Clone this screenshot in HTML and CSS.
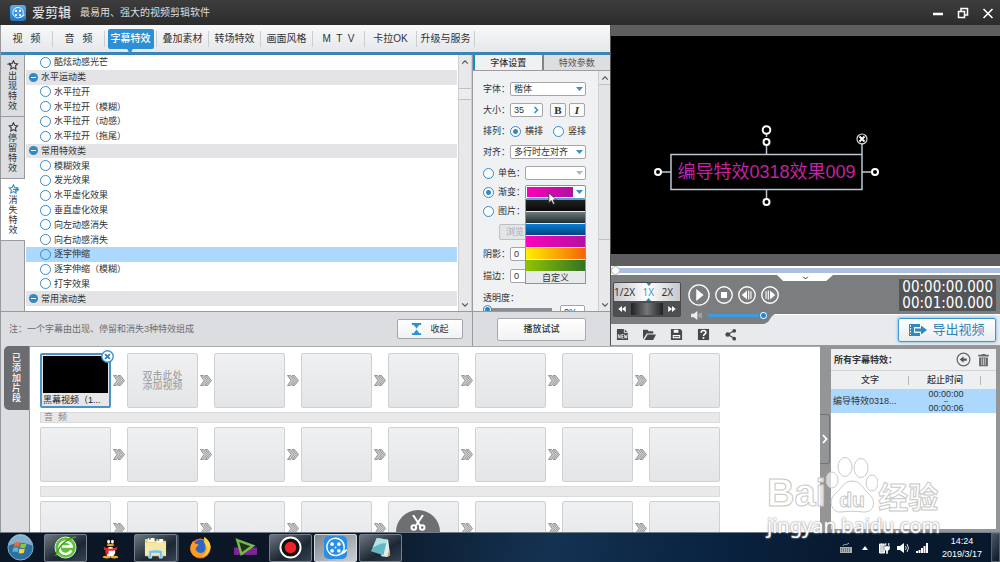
FILE: index.html
```html
<!DOCTYPE html>
<html lang="zh-CN">
<head>
<meta charset="utf-8">
<title>爱剪辑</title>
<link rel="stylesheet" href="styles.css">
</head>
<body>
<svg class="defs" aria-hidden="true">
  <defs>
    <symbol id="reel" viewBox="0 0 24 24"><g fill="none" stroke="#fff" stroke-width="1.500"><path d="M20 15.5A9 9 0 1 1 21 12c0 2 0 3-1 4 1 0 2-.5 3-1-2 3-5 4-8 4.500"/></g><g fill="#fff"><circle cx="8.500" cy="8.500" r="1.900"/><circle cx="15.500" cy="8.500" r="1.900"/><circle cx="8.500" cy="15.500" r="1.900"/><circle cx="15.500" cy="15.500" r="1.900"/><circle cx="12" cy="12" r="1"/></g></symbol>
    <symbol id="star" viewBox="0 0 14 12"><path d="M7.500 1l1.600 3.200 3.400.500-2.500 2.400.600 3.600-3.100-1.700-3.100 1.700.600-3.600L2.500 4.700l3.400-.500z" fill="none" stroke="currentColor" stroke-width="1.300"/></symbol>
    <symbol id="up" viewBox="0 0 10 6"><path d="M1.500 5L5 1.500 8.500 5" fill="none" stroke="currentColor" stroke-width="1.500"/></symbol>
    <symbol id="down" viewBox="0 0 10 6"><path d="M1.500 1L5 4.500 8.500 1" fill="none" stroke="currentColor" stroke-width="1.500"/></symbol>
  </defs>
</svg>

<header class="titlebar">
  <span class="logo"><svg viewBox="0 0 24 24"><use href="#reel"/></svg></span>
  <h1>爱剪辑</h1>
  <p>最易用、强大的视频剪辑软件</p>
  <div class="window-buttons">
    <button aria-label="最小化"><svg viewBox="0 0 12 12"><path d="M1 7h10" stroke="#fff" stroke-width="2.500"/></svg></button>
    <button aria-label="还原"><svg viewBox="0 0 12 12" fill="none" stroke="#fff" stroke-width="1.500"><path d="M1.500 4.500h6v6h-6zM4 4V1.500h6.500V8H8"/></svg></button>
    <button aria-label="关闭"><svg viewBox="0 0 12 12"><path d="M1.500 2l9 9m0-9l-9 9" stroke="#fff" stroke-width="1.600"/></svg></button>
  </div>
</header>

<main class="workspace">
  <section class="editor">
    <nav class="main-tabs">
      <button>视&ensp;&nbsp;频</button>
      <button>音&ensp;&nbsp;频</button>
      <button class="active"><span>字幕特效</span></button>
      <button>叠加素材</button>
      <button>转场特效</button>
      <button>画面风格</button>
      <button>M&nbsp; T&nbsp; V</button>
      <button>卡拉OK</button>
      <button class="wide">升级与服务</button>
    </nav>
    <div class="editor-body">
      <nav class="side-tabs">
        <button><svg viewBox="0 0 14 12"><use href="#star"/><path d="M0 5h4M2.500 3.500L4.500 5 2.500 6.500" stroke="currentColor" fill="none"/></svg><span>出现特效</span></button>
        <button><svg viewBox="0 0 14 12"><use href="#star"/></svg><span>停留特效</span></button>
        <button class="active"><svg viewBox="0 0 14 12"><use href="#star"/><path d="M7 6.500h6M11 4l2.500 2.500L11 9" stroke="currentColor" fill="none" stroke-width="1.500"/></svg><span>消失特效</span></button>
      </nav>
      <div class="effects">
        <label class="effect"><input type="radio" name="fx">酷炫动感光芒</label>
        <button class="category"><i></i>水平运动类</button>
        <label class="effect"><input type="radio" name="fx">水平拉开</label>
        <label class="effect"><input type="radio" name="fx">水平拉开（模糊）</label>
        <label class="effect"><input type="radio" name="fx">水平拉开（动感）</label>
        <label class="effect"><input type="radio" name="fx">水平拉开（拖尾）</label>
        <button class="category"><i></i>常用特效类</button>
        <label class="effect"><input type="radio" name="fx">模糊效果</label>
        <label class="effect"><input type="radio" name="fx">发光效果</label>
        <label class="effect"><input type="radio" name="fx">水平虚化效果</label>
        <label class="effect"><input type="radio" name="fx">垂直虚化效果</label>
        <label class="effect"><input type="radio" name="fx">向左动感消失</label>
        <label class="effect"><input type="radio" name="fx">向右动感消失</label>
        <label class="effect selected"><input type="radio" name="fx">逐字伸缩</label>
        <label class="effect"><input type="radio" name="fx">逐字伸缩（模糊）</label>
        <label class="effect"><input type="radio" name="fx">打字效果</label>
        <button class="category"><i></i>常用滚动类</button>
      </div>
      <div class="scrollbar list-scroll">
        <button aria-label="向上"><svg viewBox="0 0 10 6"><use href="#up"/></svg></button>
        <span class="thumb"></span>
        <button aria-label="向下"><svg viewBox="0 0 10 6"><use href="#down"/></svg></button>
      </div>
      <section class="settings">
        <div class="settings-tabs"><button class="active">字体设置</button><button>特效参数</button></div>
        <div class="settings-body">
          <form class="fields">
            <div class="field"><label for="font">字体：</label><span class="pick"><select id="font"><option>楷体</option></select></span></div>
            <div class="field"><label for="size">大小：</label><span class="spin"><input id="size" value="35"><svg viewBox="0 0 6 8"><path d="M1.500 1L4.500 4l-3 3" fill="none" stroke="#2f96cc" stroke-width="1.600"/></svg></span><button type="button" class="style bold">B</button><button type="button" class="style italic">I</button></div>
            <div class="field"><span class="caption">排列：</span><label class="choice"><input type="radio" name="dir" checked>横排</label><label class="choice"><input type="radio" name="dir">竖排</label></div>
            <div class="field"><label for="align">对齐：</label><span class="pick"><select id="align"><option>多行时左对齐</option></select></span></div>
            <div class="fill-group">
              <div class="field"><label class="choice"><input type="radio" name="fill">单色：</label><span class="pick dim"><select aria-label="单色"><option></option></select></span></div>
              <div class="field"><label class="choice"><input type="radio" name="fill" checked>渐变：</label><span class="pick open"><select class="gradient" aria-label="渐变"><option></option></select>
                <span class="swatches">
                  <button type="button" class="black" aria-label="黑色"></button>
                  <button type="button" class="slate" aria-label="灰色"></button>
                  <button type="button" class="blue" aria-label="蓝色"></button>
                  <button type="button" class="magenta" aria-label="洋红"></button>
                  <button type="button" class="orange" aria-label="橙色"></button>
                  <button type="button" class="green" aria-label="绿色"></button>
                  <button type="button" class="custom">自定义</button>
                </span>
                <svg class="cursor" viewBox="0 0 12 16"><path d="M1 1v12l3-2.500 2 4.500 2-1-2-4.300h4z" fill="#fff" stroke="#333"/></svg></span></div>
              <div class="field"><label class="choice"><input type="radio" name="fill">图片：</label></div>
            </div>
            <div class="after-fill">
              <div class="field"><button type="button" class="browse" disabled>浏览</button></div>
              <div class="field"><label for="shadow">阴影：</label><input id="shadow" class="num" value="0"></div>
              <div class="field"><label for="stroke">描边：</label><input id="stroke" class="num" value="0"></div>
              <div class="field"><label for="opacity">透明度：</label></div>
            </div>
            <div class="opacity"><input type="range" id="opacity" value="0"><input class="percent" aria-label="透明度数值" value="0%"></div>
          </form>
          <div class="scrollbar settings-scroll">
            <button aria-label="向上"><svg viewBox="0 0 10 6"><use href="#up"/></svg></button>
            <span class="thumb"></span>
            <button aria-label="向下"><svg viewBox="0 0 10 6"><use href="#down"/></svg></button>
          </div>
        </div>
      </section>
    </div>
    <footer class="editor-foot">
      <div class="note"><p>注：一个字幕由出现、停留和消失3种特效组成</p>
        <button class="collapse"><svg viewBox="0 0 12 14"><path d="M1 0h10v2H9L6 6 3 2H1zM6 7l3 4h2v2H1v-2h2z" fill="#2d93cf"/></svg>收起</button></div>
      <div class="try"><button>播放试试</button></div>
    </footer>
  </section>

  <section class="player">
    <div class="stage">
      <div class="caption-box">
        <svg viewBox="0 0 224 82" fill="none" stroke="#b9c6d2" stroke-width="1.500"><path d="M17 29.500h191v35H17zM112.500 9v3M112.500 19v10M112.500 65v9M8 47h9M208 47h9M208 18v12"/><g stroke="#fff" stroke-width="2"><circle cx="112.500" cy="5" r="3.800"/><circle cx="112.500" cy="17" r="3"/><circle cx="112.500" cy="77" r="3"/><circle cx="4" cy="47" r="3"/><circle cx="221" cy="47" r="3"/></g><circle cx="208" cy="14" r="5" stroke="#ddd" stroke-width="1.200"/><path d="M205.500 11.500l5 5m0-5l-5 5" stroke="#fff" stroke-width="2"/></svg>
        <p>编导特效0318效果009</p>
      </div>
    </div>
    <div class="seek"><input type="range" value="0" aria-label="播放进度"></div>
    <div class="deck">
      <div class="deck-left">
        <div class="speed">
          <div class="rates"><button>1/2X</button><button class="active">1X</button><button>2X</button></div>
          <div class="jog"><button aria-label="后退"><svg viewBox="0 0 10 8"><path d="M5 0v8L0 4zM10 0v8L5 4z" fill="#fff"/></svg></button><span class="wheel"></span><button aria-label="前进"><svg viewBox="0 0 10 8"><path d="M0 0v8l5-4zM5 0v8l5-4z" fill="#fff"/></svg></button></div>
        </div>
        <div class="transport">
          <div class="keys">
            <button class="play" aria-label="播放"><svg viewBox="0 0 24 24"><circle cx="12" cy="12" r="11" fill="none" stroke="#fff" stroke-width="1.500"/><path d="M9 5.500l8 6.500-8 6.500z" fill="#fff"/></svg></button>
            <button aria-label="停止"><svg viewBox="0 0 24 24"><circle cx="12" cy="12" r="11" fill="none" stroke="#fff" stroke-width="1.800"/><path d="M8 8h8v8H8z" fill="#fff"/></svg></button>
            <button aria-label="上一帧"><svg viewBox="0 0 24 24"><circle cx="12" cy="12" r="11" fill="none" stroke="#fff" stroke-width="1.800"/><path d="M12 6v12l-7-6zM13.500 6H15v12h-1.500zM16.500 7H18v10h-1.500z" fill="#fff"/></svg></button>
            <button aria-label="下一帧"><svg viewBox="0 0 24 24"><circle cx="12" cy="12" r="11" fill="none" stroke="#fff" stroke-width="1.800"/><path d="M12 6v12l7-6zM9 6h1.500v12H9zM6 7h1.500v10H6z" fill="#fff"/></svg></button>
          </div>
          <div class="volume"><svg viewBox="0 0 14 10"><path d="M1 3h3l4-3v10L4 7H1z" fill="#eee"/><path d="M10 3v4M12 2v6" stroke="#ccc"/></svg><input type="range" value="100" aria-label="音量"></div>
        </div>
      </div>
      <button class="notch" aria-label="展开"><svg viewBox="0 0 10 6"><use href="#down"/></svg></button>
      <div class="clock-box"><span>00:00:00.000</span><span>00:01:00.000</span></div>
    </div>
    <div class="tools">
      <div class="tool-icons">
        <button aria-label="新建"><svg viewBox="0 0 14 14"><path d="M1 1h8l4 4v8H1z" fill="#47484b"/><path d="M9 1v4h4" fill="none" stroke="#e9eaec"/><path d="M2.500 11V7l2 4V7M8 7H6.200v4H8M6.200 9H8M9 7l.700 4 .900-3 .800 3 .800-4" fill="none" stroke="#fff" stroke-width=".8"/></svg></button>
        <button aria-label="打开"><svg viewBox="0 0 14 14"><path d="M0 12V2h5l1 1.500h5V6H4z" fill="#47484b"/><path d="M1.500 13L5 7h9l-3 6z" fill="#47484b"/></svg></button>
        <button aria-label="保存"><svg viewBox="0 0 14 14"><path d="M1 1h10l2 2v10H1z" fill="#47484b"/><path d="M4 2h5v3H4zM3 7.500h8V11H3z" fill="#fff"/><path d="M4 9.300h6" stroke="#47484b"/></svg></button>
        <button aria-label="帮助"><svg viewBox="0 0 14 14"><path d="M1 1h12v12H1z" fill="#47484b"/><path d="M4.500 5c0-3 5-3 5 0 0 1.700-2.500 1.500-2.500 3.500M7 9.700v1.800" fill="none" stroke="#fff" stroke-width="1.700"/></svg></button>
        <button aria-label="分享"><svg viewBox="0 0 14 14"><path d="M11 3L4 7l7 4" fill="none" stroke="#47484b" stroke-width="1.300"/><g fill="#47484b"><circle cx="11" cy="3" r="2"/><circle cx="4" cy="7" r="2.500"/><circle cx="11" cy="11.500" r="2"/></g></svg></button>
      </div>
      <button class="export"><svg viewBox="0 0 18 14"><path d="M0 1h11v3H5v6h6v3H0z" fill="#3189bd"/><path d="M1.500 2v10" stroke="#fff" stroke-dasharray="1.500 1.500"/><path d="M6 5.500h6V2.500L18 7l-6 4.500v-3H6z" fill="#3189bd"/></svg>导出视频</button>
    </div>
  </section>
</main>

<section class="project">
  <div class="project-tab"><button>已添加片段</button></div>
  <div class="timeline">
    <ul class="clips">
      <li><button class="cell clip"><span class="thumb-pic"></span><span>黑幕视频（1...</span><svg class="remove" viewBox="0 0 12 12"><circle cx="6" cy="6" r="5.300" fill="#fff" stroke="#3e92c4" stroke-width="1.300"/><path d="M3.800 3.800l4.400 4.400m0-4.400L3.800 8.200" stroke="#2e83b8" stroke-width="1.600"/></svg></button></li>
      <li><button class="cell hint">双击此处<br>添加视频</button></li>
      <li><button class="cell"></button></li><li><button class="cell"></button></li><li><button class="cell"></button></li><li><button class="cell"></button></li><li><button class="cell"></button></li><li><button class="cell"></button></li>
    </ul>
    <div class="track">音&nbsp; 频</div>
    <ul class="clips">
      <li><button class="cell"></button></li><li><button class="cell"></button></li><li><button class="cell"></button></li><li><button class="cell"></button></li><li><button class="cell"></button></li><li><button class="cell"></button></li><li><button class="cell"></button></li><li><button class="cell"></button></li>
    </ul>
    <div class="track"></div>
    <ul class="clips">
      <li><button class="cell"></button></li><li><button class="cell"></button></li><li><button class="cell"></button></li><li><button class="cell"></button></li><li><button class="cell"></button></li><li><button class="cell"></button></li><li><button class="cell"></button></li><li><button class="cell"></button></li>
    </ul>
    <button class="cut" aria-label="剪切"><svg viewBox="0 0 16 16" fill="none" stroke="#fff" stroke-width="2"><path d="M3 0l7 10.500M13 0L6 10.500"/><circle cx="3.800" cy="12.500" r="2.300"/><circle cx="12.200" cy="12.500" r="2.300"/></svg></button>
  </div>
  <div class="splitter"><button aria-label="收起面板"><svg viewBox="0 0 6 10"><path d="M1 1l3.500 4L1 9" fill="none" stroke="#fff" stroke-width="1.800"/></svg></button></div>
  <aside class="captions">
    <div class="captions-head"><h2>所有字幕特效：</h2>
      <button aria-label="返回"><svg viewBox="0 0 16 16"><circle cx="8" cy="8" r="6.800" fill="none" stroke="#666" stroke-width="1.300"/><path d="M4 8l4-3.500v2.300h3.500v2.400H8v2.300z" fill="#555"/></svg></button>
      <button aria-label="删除"><svg viewBox="0 0 14 16"><path d="M5 2V1h4v1h4v2H1V2zM2 5h10v10H2z" fill="#666"/><path d="M5 6v8M7 6v8M9 6v8" stroke="#eee" stroke-width=".8"/></svg></button></div>
    <table>
      <thead><tr><th>文字</th><th>起止时间</th><th class="rest"></th></tr></thead>
      <tbody><tr><td>编导特效0318...</td><td class="time"><span>00:00:00</span><span class="dash">--</span><span>00:00:06</span></td><td></td></tr></tbody>
    </table>
  </aside>
</section>

<footer class="taskbar">
  <button class="start" aria-label="开始"><svg viewBox="0 0 28 28"><circle cx="14" cy="14" r="13" fill="#2d6f9f" stroke="#82b4cf"/><path d="M2 12a12 12 0 0 1 24 0c-8-4-16-4-24 0z" fill="#a8cde0" opacity=".7"/><path d="M8 9c2-1 4-1 5.500 0l-1 4.500c-2-1-4-1-5.500 0z" fill="#ef6a2c"/><path d="M14.500 9.500c2 1 4 1 6 0L19 14c-2 1-4 1-5.500 0z" fill="#8cc63f"/><path d="M6.500 14.500c2-1 4-1 5.500 0L11 19c-2-1-4-1-5.500 0z" fill="#4fb7ea"/><path d="M13 15c2 1 4 1 5.500 0l-1 4.500c-2 1-4 1-5.500 0z" fill="#fbd237"/></svg></button>
  <div class="apps">
    <button class="running" aria-label="浏览器"><svg viewBox="0 0 24 24"><circle cx="12" cy="12" r="11" fill="#5fc037" stroke="#dff3d0"/><path d="M18 15a6.500 6.500 0 1 1 .5-4H8" fill="none" stroke="#fff" stroke-width="2.500"/><path d="M2 21C4 11 12 3 23 1" stroke="#36a51c" fill="none" stroke-width="1.500"/></svg></button>
    <button aria-label="QQ"><svg viewBox="0 0 24 24"><ellipse cx="8" cy="22" rx="4" ry="1.500" fill="#f5a623"/><ellipse cx="16" cy="22" rx="4" ry="1.500" fill="#f5a623"/><path d="M12 1c-5 0-6 4-6 8-2 3-4 6-3 9l3-2c1 7 11 7 12 0l3 2c1-3-1-6-3-9 0-4-1-8-6-8z" fill="#111"/><ellipse cx="12" cy="16.500" rx="5" ry="5" fill="#fff"/><ellipse cx="10" cy="6" rx="1.500" ry="2" fill="#fff"/><ellipse cx="14" cy="6" rx="1.500" ry="2" fill="#fff"/><ellipse cx="12" cy="9.500" rx="4" ry="1.200" fill="#f5a623"/><path d="M5 11c4 3 10 3 14 0v3c-3 1-6 2-9 1v4H7v-4l-2-1z" fill="#e0252c"/></svg></button>
    <button class="running stacked" aria-label="资源管理器"><svg viewBox="0 0 24 24"><path d="M1 3h8l2 2h12v16H1z" fill="#e8cf79"/><path d="M4 2h7v4H4zM13 3h7v4h-7z" fill="#fff"/><path d="M5 2h2v2H5zM14 3h2v2h-2z" fill="#4aa34f"/><path d="M1 7h22v13H1z" fill="#f7e7a5"/><path d="M5 23v-7c0-2 14-2 14 0v7h-3v-5H8v5z" fill="#73bce2" stroke="#cceafa"/></svg></button>
    <button aria-label="Firefox"><svg viewBox="0 0 24 24"><circle cx="12" cy="13" r="10.500" fill="#f26522"/><circle cx="12" cy="11" r="7" fill="#2a67c9"/><path d="M16 1c6 4 8 10 5 15-4 8-15 9-19 1C0 11 3 7 5 5c0 3 2 3 5 4-1 2-3 2-3 5 2 5 9 5 10 0 1-4-2-7-1-13z" fill="#ff9a1f"/><path d="M16 1c6 4 8 10 5 15-2 4-5 6-8 6 8-5 6-12 3-15z" fill="#ffd43b"/></svg></button>
    <button aria-label="编辑工具"><svg viewBox="0 0 28 24"><path d="M0 12h28v9H0z" fill="#7d2592"/><path d="M4 3l19 7L9 20z" fill="#20321e" stroke="#76b947" stroke-width="3"/></svg></button>
    <button class="running" aria-label="录屏"><svg viewBox="0 0 24 24"><circle cx="12" cy="12" r="10.500" fill="#111" stroke="#fff" stroke-width="2"/><circle cx="12" cy="12" r="6" fill="#f0232a"/></svg></button>
    <button class="running front" aria-label="爱剪辑"><svg viewBox="0 0 24 24"><rect width="24" height="24" rx="5" fill="#278fe8"/><use href="#reel"/></svg></button>
    <button class="running" aria-label="便笺"><svg viewBox="0 0 24 24"><path d="M9 2l11 2 2 16-3 2-6-1z" fill="#e3ecea"/><path d="M21 15l1 5-3 2z" fill="#c99a3f"/><path d="M8 2l11 2-4 16-13-4z" fill="#64b7c5"/><path d="M8 2l11 2-1 4C12 6 8 11 4 12z" fill="#b4e2e7"/></svg></button>
  </div>
  <div class="tray">
    <svg viewBox="0 0 12 12"><path d="M0 5h12v6H0z" fill="#a9afb5"/><path d="M1 7h10M1 9h10" stroke="#344" stroke-dasharray="1 1"/><path d="M3 4c1-3 3 0 6-3" stroke="#a9afb5" fill="none"/></svg>
    <svg viewBox="0 0 12 12"><path d="M6 4l3 4H3z" fill="#fff"/></svg>
    <svg viewBox="0 0 12 12"><path d="M1.500 2h5v9h-5z" fill="#cfd4d8" stroke="#fff"/><path d="M6 4h6v3l-2 2v3H8V9L6 7zM7 1h1.500v3H7zM10 1h1.500v3H10z" fill="#fff" stroke="#14253a" stroke-width=".4"/></svg>
    <svg viewBox="0 0 12 12"><path d="M0 4h3l4-3v10L3 8H0z" fill="#fff"/><path d="M8.500 4q1.500 2 0 4M10 2q3 4 0 8" stroke="#ddd" fill="none"/></svg>
    <svg viewBox="0 0 12 12"><path d="M0 9h2v2H0zM2.500 8h2v3h-2zM5 6h2v5H5zM7.500 4h2v7h-2zM10 1h2v10h-2z" fill="#fff"/></svg>
  </div>
  <time><span>14:24</span><span>2019/3/17</span></time>
  <button class="desktop" aria-label="显示桌面"></button>
</footer>

<div class="watermark">
  <div class="mark"><span>Bai</span><span class="paw"><svg viewBox="0 0 52 58"><g fill="#fff" fill-opacity=".6" stroke="#c9c9c9"><ellipse cx="19" cy="11" rx="7" ry="9.500"/><ellipse cx="35" cy="12" rx="7" ry="9.500"/><ellipse cx="6" cy="24" rx="6" ry="8"/><ellipse cx="46" cy="27" rx="6" ry="8"/><path d="M26 25c-9 0-11 9-17 13-7 6-4 19 6 18 7-1 15-1 22 0 11 1 14-11 6-18-6-5-8-13-17-13z"/></g></svg><b>du</b></span><span class="cn">经验</span></div>
  <div class="site">jingyan.baidu.com</div>
</div>
</body>
</html>
```

FILE: styles.css
```css
* { box-sizing: border-box; }
html, body { height: 100%; }
body {
  margin: 0;
  display: flex;
  flex-direction: column;
  position: relative;
  overflow: hidden;
  font: 9px/12px "Liberation Sans", "Noto Sans CJK SC", sans-serif;
  color: #303236;
  background: #dcdde1;
}
button, input, select { font: inherit; color: inherit; margin: 0; padding: 0; }
button { border: 0; background: none; display: flex; align-items: center; justify-content: center; white-space: nowrap; }
svg { display: block; flex: none; }
h1, h2, p, ul { margin: 0; padding: 0; }
.defs { position: absolute; width: 0; height: 0; }

/* Title bar */
.titlebar { flex: none; height: 25px; display: flex; align-items: center; padding: 0 6px 0 10px; background: linear-gradient(#3d3d3d, #2c2c2c); color: #ddd; }
.logo { width: 16px; height: 16px; padding: 1px; border-radius: 3px; background: linear-gradient(#56b0ee, #2276c8); }
.titlebar h1 { font-size: 13px; line-height: 16px; font-weight: 500; margin: 0 9px 0 6px; }
.titlebar p { font-size: 10px; flex: 1; }
.window-buttons { display: flex; gap: 13px; }
.window-buttons svg { width: 12px; height: 12px; }

.workspace { flex: 321 1 0; min-height: 0; display: grid; grid-template-columns: 61fr 39fr; }
.editor { display: flex; flex-direction: column; min-width: 0; min-height: 0; border-left: 1px solid #96989c; background: #dcdde1; }

/* Main tabs */
.main-tabs { flex: none; height: 30px; display: flex; align-items: center; background: linear-gradient(#f7f8f9, #e6e7ea); border-bottom: 3px solid #3a84b6; }
.main-tabs button { width: 52px; height: 16px; font-size: 10px; border-right: 1px solid #cccdd0; }
.main-tabs .wide { width: 58px; }
.main-tabs .active { position: relative; color: #fff; font-weight: 500; }
.main-tabs .active span { padding: 3px; line-height: 14px; border-radius: 2px; background: #2d8fd6; }
.main-tabs .active::after { content: ""; position: absolute; left: 22px; top: 18px; width: 6px; height: 6px; background: #2d8fd6; clip-path: polygon(0 0, 100% 0, 50% 100%); }

.editor-body { flex: 1; min-height: 0; display: flex; }
.side-tabs { width: 24px; flex: none; border-right: 1px solid #999; }
.side-tabs button { width: 100%; flex-direction: column; padding: 5px 0; gap: 1px; border-bottom: 1px solid #9a9ca0; line-height: 10px; }
.side-tabs span { width: 9px; white-space: normal; }
.side-tabs svg { width: 14px; height: 10px; }
.side-tabs .active { background: #fff; width: 24px; }
.side-tabs .active svg { color: #2d8fcb; }

/* Effects list */
.effects { flex: 1; min-width: 0; display: grid; grid-template-rows: repeat(17, minmax(0, 1fr)); padding: 0 1px 5px; background: #fff; overflow: hidden; }
.effect { display: flex; align-items: center; gap: 3px; padding-left: 14px; }
.effect.selected { background: #abd8fc; }
.category { justify-content: flex-start; gap: 3px; padding-left: 3px; background: #e4e4e6; }
.category i { width: 9px; height: 9px; border-radius: 50%; background: linear-gradient(#fff, #fff) center / 5px 1px no-repeat #318ac3; }
input[type="radio"] { appearance: none; flex: none; width: 11px; height: 11px; border: 1px solid #3989c1; border-radius: 50%; background: #fff; }
.effect.selected input { background: none; }
input[type="radio"]:checked { background: radial-gradient(circle, #2f8cc9 0 2px, #fff 3px); }

.scrollbar { flex: none; width: 14px; display: flex; flex-direction: column; align-items: stretch; background: #e8e8ea; border: 1px solid #cfcfd2; border-width: 0 1px; color: #555; }
.scrollbar button { height: 13px; flex: none; }
.scrollbar svg { width: 8px; height: 6px; }
.scrollbar button:last-child { margin-top: auto; }
.thumb { background: #ececee; border: 1px solid #bfc0c3; border-width: 1px 0; }
.list-scroll .thumb { height: 12px; margin-top: 20px; }
.settings-scroll { width: 12px; border-right: 0; }
.settings-scroll .thumb { height: 156px; background: #e3e4e6; }

/* Font settings */
.settings { flex: none; width: 138px; display: flex; flex-direction: column; border-left: 1px solid #999ba0; background: #eff1f3; }
.settings-tabs { flex: none; display: grid; grid-template-columns: 1fr 1fr; height: 16px; border-bottom: 1px solid #9b9da1; }
.settings-tabs button { border-left: 2px solid #828386; background: #dcdee0; color: #555; }
.settings-tabs .active { border-left-color: #168bc0; background: #eff1f3; color: #303236; font-weight: 500; }
.settings-body { flex: 1; min-height: 0; display: flex; }
.fields { flex: 1; min-width: 0; overflow: hidden; display: flex; flex-direction: column; gap: 5px; padding: 10px 12px 0 10px; }
.field { flex: none; height: 16px; display: flex; align-items: center; white-space: nowrap; }
.field > label:not(.choice), .caption { width: 27px; flex: none; }
.choice { display: flex; align-items: center; gap: 4px; }
.choice + .choice { margin-left: 10px; }
.fill-group { display: flex; flex-direction: column; gap: 3px; }
.fill-group .choice { width: 42px; flex: none; }
.after-fill { display: flex; flex-direction: column; gap: 6px; }
.pick { position: relative; flex: 1; height: 14px; }
.pick::after { content: ""; position: absolute; right: 3px; top: 5px; width: 7px; height: 4px; background: #3492c7; clip-path: polygon(0 0, 100% 0, 50% 100%); }
.pick.dim::after { background: #b5b6ba; }
select { appearance: none; display: block; width: 100%; height: 14px; border: 1px solid #a4a6aa; border-radius: 2px; background: #fff; padding: 0 3px; line-height: 12px; }
select.gradient { border-color: #56a4d2; background: linear-gradient(90deg, #fb00b9, #b010a0) 1px 1px / 46px 10px no-repeat #fff; }
.spin, .num, .percent { border: 1px solid #a4a6aa; border-radius: 2px; background: #fff; height: 14px; }
.spin { display: flex; align-items: center; width: 33px; padding: 0 3px; }
.spin input { flex: 1; width: 18px; min-width: 0; border: 0; background: none; line-height: 12px; }
.spin svg { width: 6px; height: 8px; }
.style { width: 16px; height: 14px; border: 1px solid #a4a6aa; border-radius: 2px; background: #fafafa; margin-left: 3px; font-family: "Liberation Serif", serif; font-size: 11px; }
.bold { font-weight: 700; margin-left: 7px; }
.italic { font-style: italic; font-weight: 700; }
.browse { width: 32px; height: 16px; margin-left: 16px; border: 1px solid #bfc0c3; border-radius: 2px; color: #aaa; background: #e4e5e7; }
.num { width: 34px; padding: 0 3px; }
.opacity { display: flex; gap: 8px; height: 16px; flex: none; margin-top: -6px; }
.opacity input[type="range"] { width: 69px; height: 9px; }
.percent { width: 25px; padding: 0 3px; }
.swatches { position: absolute; z-index: 2; top: 14px; left: 0; right: 0; display: flex; flex-direction: column; gap: 1px; border: 1px solid #909398; background: #e7eaeb; }
.swatches button { height: 11px; }
.black { background: linear-gradient(#222, #080808); }
.slate { background: linear-gradient(#6c7b7c, #202d30); }
.blue { background: linear-gradient(#087ed4, #06437c); }
.magenta { background: linear-gradient(90deg, #f804bb, #b411a2); }
.orange { background: linear-gradient(90deg, #fff000, #f46409); }
.green { background: linear-gradient(90deg, #8fc400, #347326); }
.cursor { position: absolute; z-index: 3; left: 23px; top: 6px; width: 10px; height: 15px; }

input[type="range"] { appearance: none; background: none; }
input[type="range"]::-webkit-slider-runnable-track { height: 3px; background: #8b8d92; }
input[type="range"]::-webkit-slider-thumb { appearance: none; width: 9px; height: 9px; margin-top: -3px; border: 1px solid #3788bd; border-radius: 50%; background: radial-gradient(circle, #2b86c0 0 2px, #fff 3px); }

.editor-foot { flex: none; height: 35px; display: flex; border-top: 1px solid #97999d; }
.note { flex: 1; display: flex; align-items: center; justify-content: space-between; padding: 0 9px 0 8px; color: #6c6e72; }
.collapse { width: 66px; height: 20px; gap: 8px; border: 1px solid #a3a5aa; border-radius: 2px; background: linear-gradient(#fff, #f0f1f2); color: #303236; }
.collapse svg { width: 11px; height: 13px; }
.try { width: 138px; border-left: 1px solid #97999d; display: flex; align-items: center; justify-content: center; }
.try button { width: 89px; height: 23px; border: 1px solid #a8aaae; border-radius: 2px; background: linear-gradient(#fff, #f1f2f3); font-weight: 500; }

/* Player */
.player { display: flex; flex-direction: column; min-width: 0; min-height: 0; border-left: 1px solid #555; background: #5e5e5e; }
.stage { flex: 1; min-height: 0; position: relative; margin: 11px 0 12px; background: #000; }
.caption-box { position: absolute; left: 43px; top: 89px; width: 224px; height: 82px; }
.caption-box svg { width: 224px; height: 82px; overflow: visible; }
.caption-box p { position: absolute; left: 17px; top: 30px; width: 191px; text-align: center; font: 18px/34px "Liberation Sans", "Noto Sans CJK SC", sans-serif; color: #c0249f; white-space: nowrap; }
.seek { flex: none; height: 9px; background: #fff; }
.seek input { display: block; width: 100%; height: 9px; }
.seek input::-webkit-slider-runnable-track { height: 5px; background: #acbfdf; }
.seek input::-webkit-slider-thumb { height: 9px; margin-top: -2px; border-color: #bbb; background: #fff; }
.deck { position: relative; z-index: 1; flex: none; height: 39px; display: flex; justify-content: space-between; align-items: flex-start; background: #7c7d7f; }
.deck::before { content: ""; position: absolute; left: 0; top: 100%; width: 164px; height: 10px; background: #7c7d7f; clip-path: polygon(0 0, 100% 0, 161px 2px, 157px 8px, 153px 100%, 0 100%); }
.deck-left { position: relative; flex: none; display: flex; gap: 7px; padding: 7px 0 0 2px; }
.speed { flex: none; width: 68px; height: 35px; border: 1px solid #4a4a4c; border-radius: 2px; background: #4e4f51; overflow: hidden; }
.rates { display: flex; justify-content: space-between; height: 18px; padding: 0 7px 0 0; background: linear-gradient(90deg, #c6c7cb, #fff, #c6c7cb); font: 10px/18px "Noto Sans", sans-serif; }
.rates .active { color: #3298d4; position: relative; }
.rates .active::before, .rates .active::after { content: ""; position: absolute; left: 4px; top: 0; width: 5px; height: 3px; background: #3280ae; clip-path: polygon(0 0, 100% 0, 50% 100%); }
.rates .active::after { top: 15px; transform: rotate(180deg); }
.jog { display: flex; align-items: center; justify-content: space-between; height: 15px; padding: 0 4px; }
.jog svg { width: 8px; height: 6px; }
.wheel { width: 32px; height: 12px; background: linear-gradient(90deg, #222, #747679, #222); }
.transport { display: flex; flex-direction: column; padding-top: 2px; gap: 4px; }
.keys { display: flex; align-items: center; gap: 5px; height: 22px; }
.keys svg { width: 18px; height: 18px; }
.keys .play svg { width: 22px; height: 22px; }
.volume { display: flex; align-items: center; gap: 5px; height: 10px; padding-left: 2px; }
.volume svg { width: 13px; height: 9px; }
.volume input { width: 60px; height: 9px; }
.volume input::-webkit-slider-runnable-track { background: #3d9bdd; }
.notch { position: absolute; left: 166px; top: 0; width: 56px; height: 6px; background: #fff; clip-path: polygon(0 0, 100% 0, 88% 100%, 11% 100%); }
.notch svg { width: 7px; height: 4px; }
.clock-box { display: flex; flex-direction: column; margin: 4px 4px 0 0; padding: 0 3px; background: #535456; color: #fff; font: 15px/16px "DejaVu Sans Condensed", "Noto Sans", sans-serif; }
.tools { flex: none; height: 32px; display: flex; align-items: center; justify-content: space-between; padding-right: 4px; background: #e9eaed; border-top: 1px solid #fff; border-bottom: 1px solid #97999c; }
.tool-icons { display: flex; gap: 14px; padding: 9px 0 0 5px; }
.tool-icons svg { width: 13px; height: 13px; }
.export { width: 98px; height: 24px; gap: 5px; border: 1px solid #3b9ad5; border-radius: 2px; box-shadow: 0 0 3px #4da7e0; background: linear-gradient(#fff, #e8edf0); color: #2b83b6; font-size: 13px; }
.export svg { width: 18px; height: 14px; }

/* Project area */
.project { flex: 186 1 0; min-height: 0; display: flex; border-left: 1px solid #96989c; }
.project-tab { flex: none; width: 29px; padding-left: 3px; border-right: 1px solid #97999d; }
.project-tab button { width: 25px; height: 64px; border-radius: 5px 0 0 5px; background: #6b6c6f; color: #fff; font-weight: 500; line-height: 10px; white-space: normal; padding: 0 8px; }
.timeline { flex: 1; min-width: 0; position: relative; overflow: hidden; display: flex; flex-direction: column; align-items: flex-start; gap: 4px; padding: 6px 10px 0; background: #fff; border-top: 1px solid #aaacaf; }
.clips { list-style: none; flex: none; display: flex; }
.clips li { display: flex; align-items: center; }
.clips li:not(:last-child)::after {
  content: "";
  width: 12px;
  height: 11px;
  margin: 0 2px;
  background: url("data:image/svg+xml,%3Csvg xmlns='http://www.w3.org/2000/svg' viewBox='0 0 12 11'%3E%3Cg fill='%23c4c4c4' stroke='%23858585' stroke-width='.8'%3E%3Cpath d='M.5.5h3l4 5-4 5h-3l3.500-5z'/%3E%3Cpath d='M5 .5h2.500l4 5-4 5H5l4-5z'/%3E%3C/g%3E%3C/svg%3E") no-repeat;
}
.cell { position: relative; width: 71px; height: 55px; border: 1px solid #cfd0d3; border-radius: 2px; background: linear-gradient(#eff0f1, #e4e5e7); color: #96989b; line-height: 9px; white-space: normal; }
.hint { font-size: 10px; line-height: 10px; }
.clip { flex-direction: column; align-items: stretch; justify-content: space-between; padding: 1px 1px 0; border: 2px solid #4b94c1; background: #e6e7e9; color: #222; line-height: 12px; white-space: nowrap; text-align: left; }
.thumb-pic { height: 37px; background: #000; }
.remove { position: absolute; right: -5px; top: -5px; width: 13px; height: 13px; }
.track { flex: none; width: 680px; height: 11px; padding-left: 3px; border: 1px solid #dadbdd; background: #e9e9ea; color: #85878a; line-height: 9px; }
.cut { position: absolute; left: 366px; bottom: -22px; width: 44px; height: 44px; border-radius: 50%; background: #6e6f71; align-items: flex-start; padding-top: 5px; }
.cut svg { width: 16px; height: 16px; }
.splitter { flex: none; width: 11px; display: flex; align-items: center; background: #949597; }
.splitter button { width: 10px; height: 50px; border: 1px solid #737477; border-left: 0; border-radius: 0 3px 3px 0; }
.splitter svg { width: 6px; height: 10px; }
.captions { flex: none; width: 169px; border: solid #949597; border-width: 3px 4px 3px 0; background: #fff; }
.captions-head { display: flex; align-items: center; gap: 6px; height: 22px; padding: 0 6px 0 3px; background: #eeeff0; border-bottom: 1px solid #d2d3d5; }
.captions-head h2 { flex: 1; font-size: 9px; line-height: 12px; font-weight: 700; }
.captions-head svg { width: 15px; height: 15px; }
.captions-head button:last-child svg { width: 13px; height: 14px; }
table { width: 100%; border-collapse: collapse; table-layout: fixed; }
th { height: 18px; padding: 0; font-weight: 500; background: linear-gradient(#b8b9bb, #b8b9bb) right / 1px 9px no-repeat #eeeff0; }
th:nth-child(2) { width: 72px; }
th.rest { width: 15px; background: #eeeff0; }
td { padding: 0 0 0 2px; height: 24px; background: #abd8fc; white-space: nowrap; }
td.time { text-align: center; }
td.time span { display: block; line-height: 10px; }
td.time .dash { font-size: 6px; line-height: 4px; font-weight: 700; }

/* Taskbar */
.taskbar { flex: none; height: 30px; display: flex; align-items: center; border-top: 1px solid #6f7c89; background: linear-gradient(100deg, #0b1727 35%, #143252 55%, #0a2443 70%, #08192e 85%); color: #fff; }
.start { width: 40px; }
.start svg { width: 27px; height: 27px; }
.apps { flex: 1; display: flex; gap: 2px; padding-left: 4px; }
.apps button { width: 43px; height: 28px; border: 1px solid transparent; border-radius: 2px; }
.apps svg { width: 23px; height: 23px; }
.apps .running { border-color: #76808b; background: linear-gradient(150deg, #6d7580, #1c2733 60%, #344252); }
.apps .front { background: linear-gradient(150deg, #7c838b, #cbd0d5); border-color: #d3d8dc; }
.apps .stacked { box-shadow: 2px 0 #344252; }
.tray { display: flex; gap: 7px; margin-right: 11px; }
.tray svg { width: 12px; height: 12px; }
time { display: flex; flex-direction: column; align-items: center; width: 46px; line-height: 13px; }
.desktop { width: 9px; height: 29px; margin-left: 6px; border: 1px solid #56616f; background: linear-gradient(120deg, #4c5968, #0a1626); }

/* Watermark */
.watermark { position: absolute; z-index: 5; left: 767px; top: 454px; color: rgba(255, 255, 255, .75); -webkit-text-stroke: 1px #c8c8c8; pointer-events: none; }
.mark { display: flex; align-items: flex-end; height: 60px; font: 700 38px/42px "Liberation Sans", sans-serif; }
.paw { position: relative; width: 52px; height: 58px; }
.paw svg { width: 52px; height: 58px; }
.paw b { position: absolute; left: 13px; bottom: 3px; font-size: 21px; line-height: 22px; }
.mark .cn { font: 700 30px/38px "Noto Sans CJK SC", sans-serif; }
.site { font: 20px/24px "Noto Sans", sans-serif; color: #fff; -webkit-text-stroke: 0; text-shadow: 0 0 2px #999, 0 0 2px #aaa; }
```
